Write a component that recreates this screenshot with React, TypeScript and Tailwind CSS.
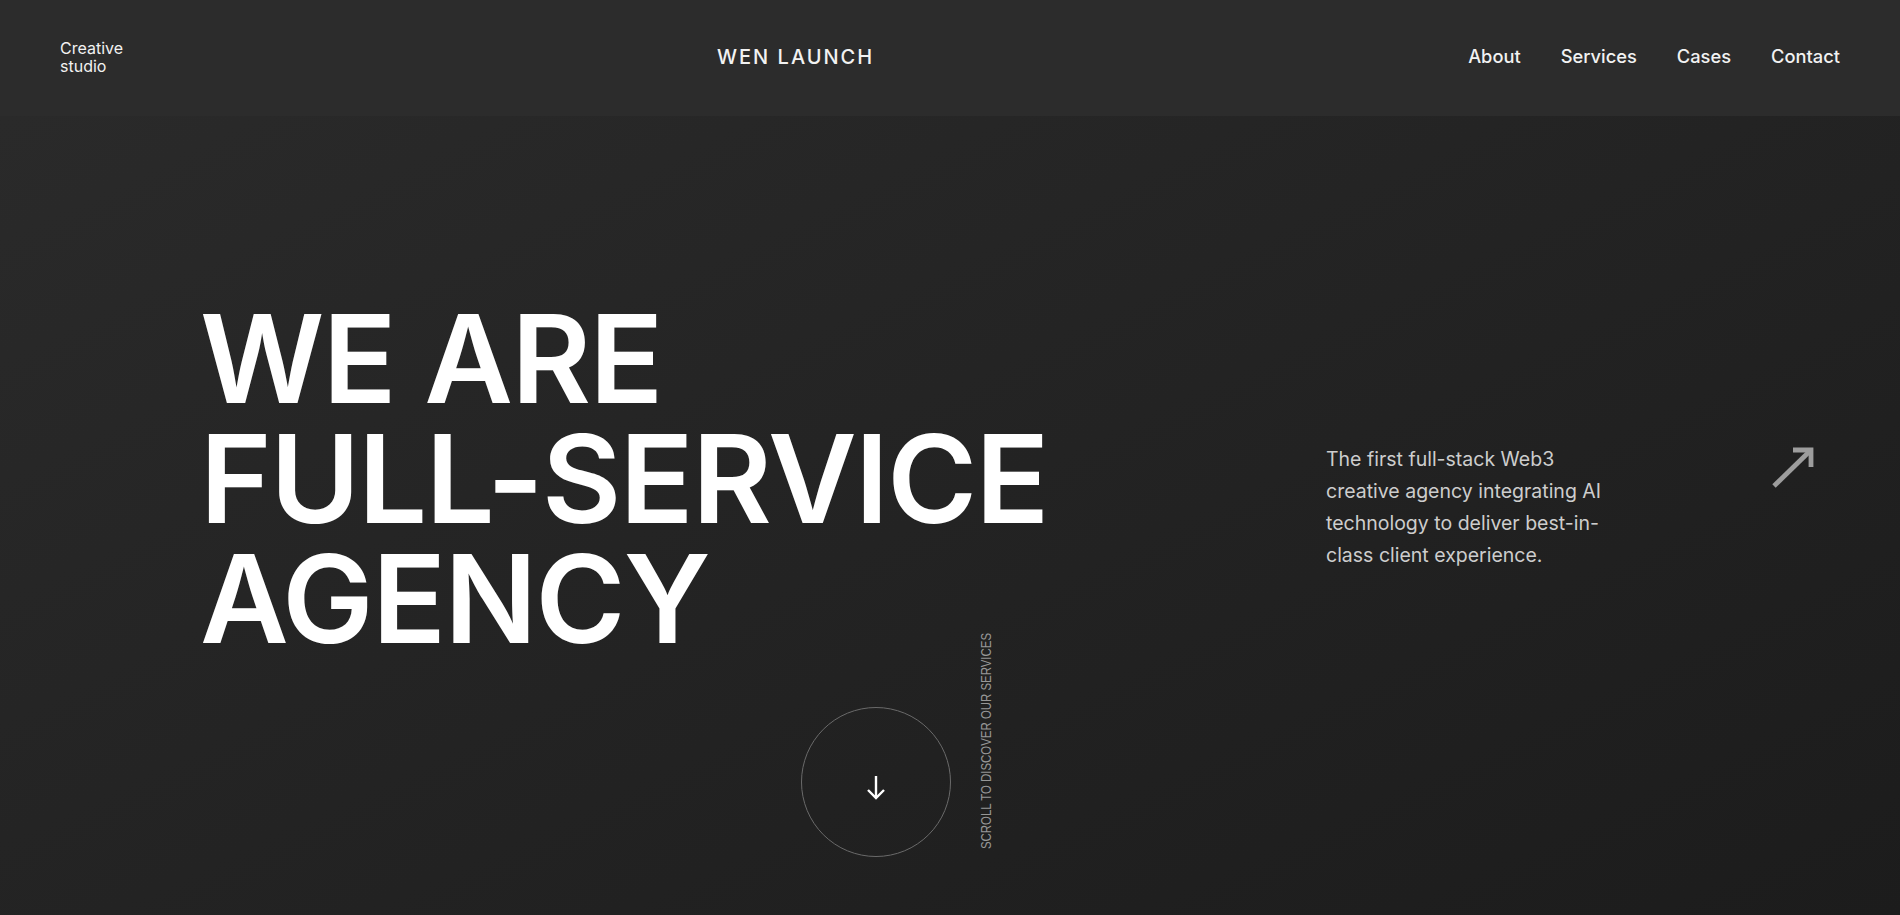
import React from 'react'

const navLinks = ['About', 'Services', 'Cases', 'Contact']

const ArrowUpRight = () => (
  <svg width="44" height="42" viewBox="0 0 44 42" fill="none">
    <path d="M3 40 L40 4" stroke="#9d9d9d" strokeWidth="4.8" />
    <path d="M22 4 H40 V21" stroke="#9d9d9d" strokeWidth="4.8" strokeLinejoin="miter" />
  </svg>
)

const ArrowDown = () => (
  <svg width="20" height="25" viewBox="0 0 20 25" fill="none">
    <path d="M10 1 V23" stroke="#ffffff" strokeWidth="2.4" />
    <path d="M2 15 L10 23 L18 15" stroke="#ffffff" strokeWidth="2.4" />
  </svg>
)

const Header = () => {
  return (
    <header className="flex h-[116px] items-center justify-between bg-[#2c2c2c] px-[60px] pb-[3px] font-['Inter',sans-serif] text-[#f2f2f2]">
      <div className="text-[16px] leading-[18px]">
        Creative
        <br />
        studio
      </div>
      <div className="text-[20px] font-medium tracking-[0.1em]">WEN LAUNCH</div>
      <nav className="flex gap-[40px] text-[18.3px] font-medium">
        {navLinks.map((link) => (
          <a key={link} href="#" className="hover:text-white">
            {link}
          </a>
        ))}
      </nav>
    </header>
  )
}

export default function App() {
  return (
    <div className="min-h-[915px] bg-linear-to-br from-[#2b2b2b] to-[#1c1c1c] font-['Inter',sans-serif]">
      <Header />
      <section className="flex h-[799px] flex-col">
        <div className="flex pl-[200px] pt-[183px]">
          <h1 className="w-[1126px] text-[122px] font-semibold uppercase leading-[120px] tracking-[-0.013em] text-white">
            We are
            <br />
            full-service
            <br />
            agency
          </h1>
          <p className="mt-[144px] w-[290px] text-[19.5px] leading-[32px] text-[#cdcdcd]">
            The first full-stack Web3 creative agency integrating AI technology to
            deliver best-in-class client experience.
          </p>
          <div className="ml-[155px] mt-[147px]">
            <ArrowUpRight />
          </div>
        </div>
        <div className="-mt-[27px] flex items-end pl-[801px]">
          <button className="flex h-[150px] w-[150px] items-center justify-center rounded-full border border-[#6a6a6a] pt-[10px]">
            <ArrowDown />
          </button>
          <div className="relative mb-[8px] ml-[28px] h-[217px] w-[14px]">
            <span className="absolute left-1/2 top-1/2 -translate-x-1/2 -translate-y-1/2 -rotate-90 scale-x-[0.816] whitespace-nowrap font-['Liberation_Sans',sans-serif] text-[14px] leading-[14px] text-[#979797]">
              SCROLL TO DISCOVER OUR SERVICES
            </span>
          </div>
        </div>
      </section>
    </div>
  )
}
